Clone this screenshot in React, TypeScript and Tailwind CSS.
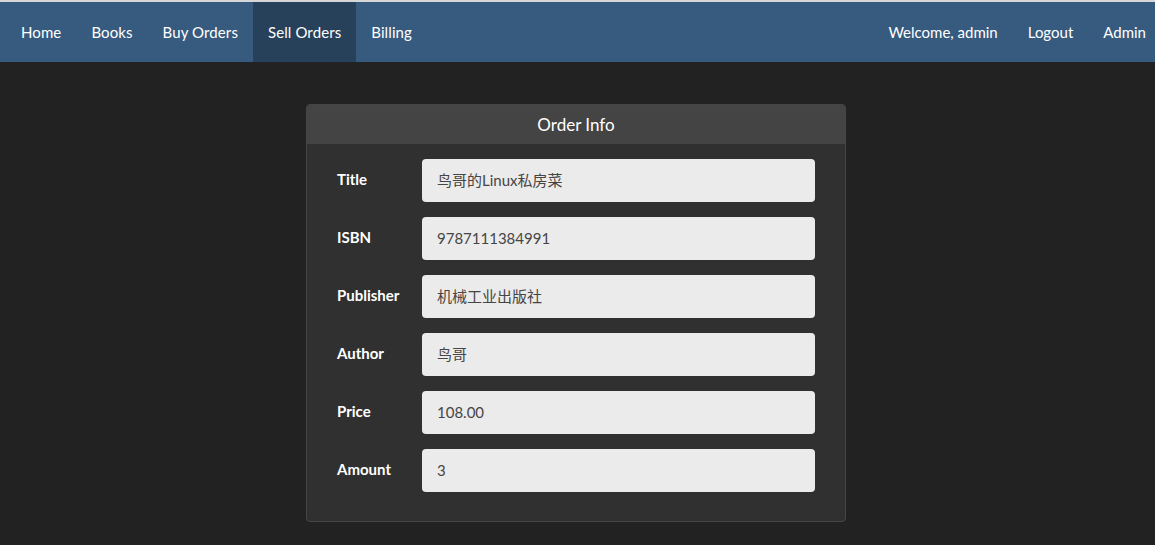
const fields = [
  { label: 'Title', value: '鸟哥的Linux私房菜' },
  { label: 'ISBN', value: '9787111384991' },
  { label: 'Publisher', value: '机械工业出版社' },
  { label: 'Author', value: '鸟哥' },
  { label: 'Price', value: '108.00' },
  { label: 'Amount', value: '3' },
]

const leftLinks = ['Home', 'Books', 'Buy Orders', 'Sell Orders', 'Billing']

export default function App() {
  return (
    <div
      className="min-h-[545px] bg-[#222222] text-[15px] text-white"
      style={{ fontFamily: 'Lato, "Noto Sans CJK SC", sans-serif' }}
    >
      {/* navbar */}
      <nav className="flex h-[62px] border-t-2 border-[#d6d6d6] bg-[#375a7f] pl-[6px]">
        <ul className="flex tracking-[0.1px]">
          {leftLinks.map((link) => (
            <li
              key={link}
              className={`flex items-center px-[15px] ${link === 'Sell Orders' ? 'bg-[#28415b]' : ''}`}
            >
              {link}
            </li>
          ))}
        </ul>
        <ul className="ml-auto flex">
          <li className="flex items-center px-[15px]">Welcome, admin</li>
          <li className="flex items-center px-[15px]">Logout</li>
          <li className="flex items-center pl-[15px] pr-[9px]">Admin</li>
        </ul>
      </nav>

      {/* order panel */}
      <div className="flex pl-[306px] pt-[42px]">
        <div className="w-[540px] overflow-hidden rounded border border-[#464545] bg-[#303030]">
          <div className="flex h-[39px] items-center justify-center bg-[#444444] text-[17px]">
            Order Info
          </div>
          <div className="flex flex-col gap-[15px] px-[30px] pb-[29px] pt-[15px]">
            {fields.map((f) => (
              <div key={f.label} className="flex items-center">
                <label className="-mt-[2px] w-[85px] font-bold">{f.label}</label>
                <div className="flex h-[43px] flex-1 items-center rounded bg-[#ebebeb] px-[15px] text-[#464545]">
                  {f.value}
                </div>
              </div>
            ))}
          </div>
        </div>
      </div>
    </div>
  )
}
